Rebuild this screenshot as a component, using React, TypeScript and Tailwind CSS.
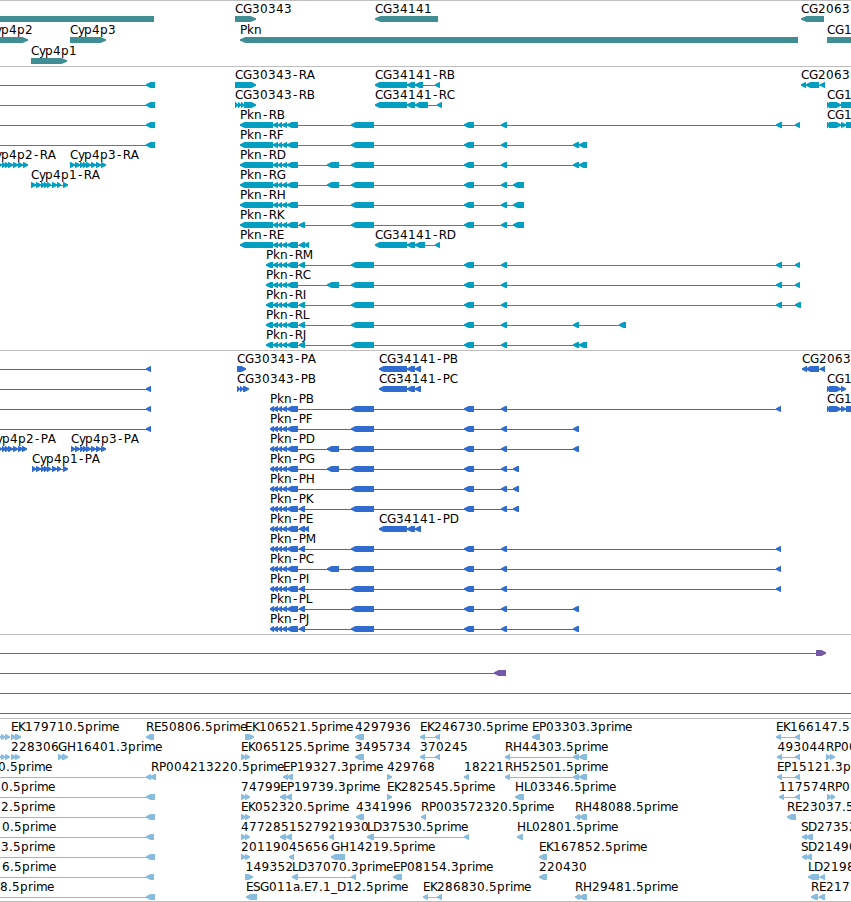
type Span = [number, number];

type Feature = {
  label?: string;
  at?: number;
  dir?: "left" | "right" | "none";
  spans: Span[];
};

type TrackData = {
  color: string;
  head: number;
  rowClass: string;
  trackClass: string;
  rows: Feature[][];
};

const left = (label: string, at: number, ...spans: Span[]): Feature => ({ label, at, dir: "left", spans });
const right = (label: string, at: number, ...spans: Span[]): Feature => ({ label, at, dir: "right", spans });

// zero-width span that pulls the connecting line past the left edge
const OFF: Span = [-20, -20];

const MID: Span[] = [[273, 278], [278, 282], [282, 287], [287, 298]];
const RNA_LONG: Span[] = [[240, 273], ...MID];
const RNA_SHORT: Span[] = [[266, 273], ...MID];
const CDS: Span[] = [[270, 274], ...MID];
const E299: Span = [299, 305];
const E327: Span = [327, 339];
const CORE: Span[] = [[351, 374], [464, 474], [501, 507]];
const FAR: Span[] = [[776, 782], [795, 800]];
const PAIR: Span[] = [[573, 579], [579, 587]];
const CYP3: Span[] = [[70, 75], [75, 80], [80, 84], [83, 87], [86, 91], [91, 96], [96, 101], [101, 106]];
const CYP2: Span[] = CYP3.map(([a, b]) => [a - 78, b - 78]);
const CYP1: Span[] = [[31, 36], [36, 41], [41, 45], [44, 48], [47, 51], [52, 57], [57, 61], [63, 68]];
const CG2063: Span[] = [[802, 807], [806, 819], [820, 825]];
const CG1: Span[] = [[827, 830], [829, 841]];

const genes: Feature[][] = [
  [
    { dir: "none", spans: [[-20, 154]] },
    right("CG30343", 235, [235, 256]),
    left("CG34141", 375, [375, 438]),
    left("CG2063", 801, [801, 824]),
  ],
  [
    right("Cyp4p2", -13, [-20, 28]),
    right("Cyp4p3", 70, [70, 106]),
    left("Pkn", 240, [240, 798]),
    right("CG1", 827, [827, 870]),
  ],
  [right("Cyp4p1", 31, [31, 67])],
];

const rnaEdge = left("", 0, OFF, [146, 155]);

const transcripts: Feature[][] = [
  [
    rnaEdge,
    right("CG30343-RA", 235, [235, 256]),
    left("CG34141-RB", 375, [375, 407], [407, 415], [415, 423], [435, 440]),
    left("CG2063", 801, [801, 806], ...CG2063.slice(1)),
  ],
  [
    rnaEdge,
    right("CG30343-RB", 235, [235, 238], [238, 241], [241, 244], [244, 256]),
    left("CG34141-RC", 375, [375, 407], [407, 415], [415, 428], [437, 442]),
    right("CG1", 827, ...CG1, [841, 860]),
  ],
  [
    rnaEdge,
    left("Pkn-RB", 240, ...RNA_LONG, ...CORE, ...FAR),
    right("CG1", 827, ...CG1, [841, 846], [846, 860]),
  ],
  [rnaEdge, left("Pkn-RF", 240, ...RNA_LONG, ...CORE, ...PAIR)],
  [
    right("Cyp4p2-RA", -13, ...CYP2),
    right("Cyp4p3-RA", 70, ...CYP3),
    left("Pkn-RD", 240, ...RNA_LONG, E327, ...CORE, ...PAIR),
  ],
  [right("Cyp4p1-RA", 31, ...CYP1), left("Pkn-RG", 240, ...RNA_LONG, E327, ...CORE, [513, 524])],
  [left("Pkn-RH", 240, ...RNA_LONG, ...CORE, [513, 524])],
  [left("Pkn-RK", 240, ...RNA_LONG, E299, ...CORE, [513, 524])],
  [
    left("Pkn-RE", 240, ...RNA_LONG, E299, [304, 309]),
    left("CG34141-RD", 375, [375, 407], [407, 415], [415, 425], [435, 440]),
  ],
  [left("Pkn-RM", 266, ...RNA_SHORT, E299, ...CORE, ...FAR)],
  [left("Pkn-RC", 266, ...RNA_SHORT, E327, ...CORE, ...FAR)],
  [left("Pkn-RI", 266, ...RNA_SHORT, E299, ...CORE, [776, 782], [795, 801])],
  [left("Pkn-RL", 266, ...RNA_SHORT, E299, ...CORE, [573, 579], [619, 626])],
  [left("Pkn-RJ", 266, ...RNA_SHORT, E299, ...CORE, ...PAIR)],
];

const cdsEdge = left("", 0, OFF, [146, 151]);
const CG34141P: Span[] = [[379, 407], [407, 415], [415, 421]];

const proteins: Feature[][] = [
  [
    cdsEdge,
    right("CG30343-PA", 237, [237, 246]),
    left("CG34141-PB", 379, ...CG34141P),
    left("CG2063", 802, ...CG2063),
  ],
  [
    cdsEdge,
    right("CG30343-PB", 237, [237, 240], [240, 243], [243, 249]),
    left("CG34141-PC", 379, ...CG34141P),
    right("CG1", 827, ...CG1, [841, 846]),
  ],
  [
    cdsEdge,
    left("Pkn-PB", 270, ...CDS, ...CORE, [776, 781]),
    right("CG1", 827, ...CG1, [841, 846], [846, 860]),
  ],
  [cdsEdge, left("Pkn-PF", 270, ...CDS, ...CORE, [573, 579])],
  [
    right("Cyp4p2-PA", -12, ...CYP2.slice(0, 7), [22, 27]),
    right("Cyp4p3-PA", 71, [71, 75], ...CYP3.slice(1)),
    left("Pkn-PD", 270, ...CDS, E327, ...CORE, [573, 579]),
  ],
  [
    right("Cyp4p1-PA", 32, [32, 36], ...CYP1.slice(1)),
    left("Pkn-PG", 270, ...CDS, E327, ...CORE, [513, 519]),
  ],
  [left("Pkn-PH", 270, ...CDS, ...CORE, [513, 519])],
  [left("Pkn-PK", 270, ...CDS, E299, ...CORE, [513, 519])],
  [left("Pkn-PE", 270, ...CDS, E299, [304, 309]), left("CG34141-PD", 379, ...CG34141P)],
  [left("Pkn-PM", 270, ...CDS, E299, ...CORE, [776, 781])],
  [left("Pkn-PC", 270, ...CDS, E327, ...CORE, [776, 781])],
  [left("Pkn-PI", 270, ...CDS, E299, ...CORE, [776, 781])],
  [left("Pkn-PL", 270, ...CDS, E299, ...CORE, [573, 579])],
  [left("Pkn-PJ", 270, ...CDS, E299, ...CORE, [573, 579])],
];

const insertions: Feature[][] = [
  [right("", 0, OFF, [816, 826])],
  [left("", 0, OFF, [494, 506])],
  [{ dir: "none", spans: [OFF, [870, 870]] }],
  [{ dir: "none", spans: [OFF, [870, 870]] }],
];

const EST_EDGE: Span[] = [[-3, 1], [1, 5], [5, 10]];
const TWIN: Span[] = [[241, 246], [245, 250]];

const ests: Feature[][] = [
  [
    right("", 0, ...EST_EDGE),
    right("EK179710.5prime", 11, [11, 16], [15, 21]),
    left("RE50806.5prime", 146, [146, 154]),
    right("EK106521.5prime", 245, [245, 254]),
    left("4297936", 355, [355, 364]),
    left("EK246730.5prime", 420, [420, 425], [435, 440]),
    left("EP03303.3prime", 532, [532, 540]),
    left("EK166147.5", 776, [776, 781], [795, 800]),
  ],
  [
    right("", 0, ...EST_EDGE),
    right("228306", 11, [11, 16], [15, 20]),
    right("GH16401.3prime", 58, [58, 63], [62, 68]),
    right("EK065125.5prime", 241, ...TWIN),
    left("3495734", 355, [355, 364]),
    left("370245", 420, [420, 425], [435, 440]),
    left("RH44303.5prime", 505, [505, 510], ...PAIR),
    left("493044", 777.5, [777, 782], [795, 800]),
    right("RP00", 826, [826, 831], [830, 835]),
  ],
  [
    left("0.5prime", -2, OFF, [146, 151], [150, 156]),
    left("RP004213220.5prime", 151),
    left("EP19327.3prime", 283, [283, 288], [287, 293]),
    right("429768", 387, [387, 392]),
    left("18221", 464, [464, 469]),
    left("RH52501.5prime", 505, [505, 510], ...PAIR),
    left("EP15121.3p", 777, [777, 782], [795, 800]),
  ],
  [
    left("0.5prime", 1, OFF, [146, 155]),
    right("74799", 241, ...TWIN),
    left("EP19739.3prime", 280, [280, 286], [286, 292]),
    right("EK282545.5prime", 387, [387, 392]),
    left("HL03346.5prime", 515, [515, 524]),
    left("117574", 779, [779, 784], [795, 800]),
    right("RP0", 827, [827, 832], [831, 835]),
  ],
  [
    left("2.5prime", 1, OFF, [146, 155]),
    right("EK052320.5prime", 241, ...TWIN),
    left("4341996", 356, [356, 364]),
    left("RP003572320.5prime", 421, [421, 426]),
    left("RH48088.5prime", 575, [575, 580], [579, 587]),
    left("RE23037.5", 787, [787, 796]),
  ],
  [
    left("0.5prime", 2, OFF, [146, 154]),
    right("47728", 241, ...TWIN),
    left("515279", 281, [280, 286], [286, 292]),
    left("21930", 329, [329, 334]),
    left("LD37530.5prime", 367, [367, 374], [464, 469]),
    left("HL02801.5prime", 517, [517, 523]),
    left("SD27352", 801, [802, 807], [806, 813]),
  ],
  [
    left("3.5prime", 1, OFF, [146, 155]),
    right("201190", 241, ...TWIN),
    left("45656", 289, [289, 294]),
    left("GH14219.5prime", 331, [331, 345]),
    left("EK167852.5prime", 539, [539, 547]),
    left("SD21490", 801, [802, 807], [806, 812]),
  ],
  [
    left("6.5prime", 2, OFF, [146, 154]),
    right("149352", 245.5, [245, 253]),
    left("LD37070.3prime", 292, [292, 298], [351, 356]),
    left("EP08154.3prime", 393, [393, 402]),
    left("220430", 539, [539, 547]),
    left("LD2198", 808, [808, 819], [820, 825]),
  ],
  [
    left("8.5prime", 0, OFF, [146, 155]),
    left("ESG011a.E7.1_D12.5prime", 246, [246, 257]),
    left("EK286830.5prime", 423, [423, 428], [437, 442]),
    left("RH29481.5prime", 575, [575, 580], [579, 587]),
    left("RE217", 811, [811, 818], [819, 825]),
  ],
];

const tracks: TrackData[] = [
  { color: "#408e94", head: 6, rowClass: "h-[21px]", trackClass: "h-[66px]", rows: genes },
  { color: "#009fc2", head: 5, rowClass: "h-5", trackClass: "h-[284px]", rows: transcripts },
  { color: "#306ccf", head: 5, rowClass: "h-5", trackClass: "h-[284px]", rows: proteins },
  { color: "#7558a8", head: 5, rowClass: "h-5", trackClass: "h-[84px]", rows: insertions },
  { color: "#87bcde", head: 5, rowClass: "h-5", trackClass: "h-[184px] border-b", rows: ests },
];

const ADVANCE: Record<string, number> = {
  A: 8.5, B: 7, C: 8, D: 9, E: 7, F: 7, G: 9, H: 9, I: 4, J: 4, K: 7, L: 6, M: 10, P: 7, R: 8, S: 7,
  a: 7, e: 7, i: 3, k: 7, m: 11, n: 8, p: 8, r: 5, y: 6, "-": 6.7, ".": 4, _: 6,
};

// x of every character, digits sit on an 8px pitch
const charPositions = (label: string, start: number) => {
  let x = start;
  return Array.from(label)
    .map((ch) => {
      // the hyphen is narrow, so centre it in its cell
      const current = ch === "-" ? x + 0.9 : x;
      x += ADVANCE[ch] ?? 8;
      return current;
    })
    .join(" ");
};

// blunt arrow head: the tip is about two pixels tall
const arrow = ([a, b]: Span, dir: string | undefined, head: number) => {
  if (dir === "none") return `M${a} 14H${b}V20H${a}Z`;
  const h = Math.min(head, b - a) - 0.5;
  if (dir === "left") return `M${a} 16.2L${a + h} 14H${b}V20H${a + h}L${a} 17.8Z`;
  return `M${b} 16.2L${b - h} 14H${a}V20H${b - h}L${b} 17.8Z`;
};

const Glyph = ({ feature, head }: { feature: Feature; head: number }) => {
  const { spans, dir, label, at = 0 } = feature;
  return (
    <g>
      {spans.length > 1 && (
        <rect x={spans[0][0]} y={17} width={spans[spans.length - 1][1] - spans[0][0] - 1} height={1} />
      )}
      {spans
        .filter(([a, b]) => b > a)
        .map((span, i) => (
          <path key={i} d={arrow(span, dir, head)} />
        ))}
      {label && (
        <text x={charPositions(label, at)} y={11} className="fill-black text-[12px]">
          {label}
        </text>
      )}
    </g>
  );
};

const Track = ({ track }: { track: TrackData }) => (
  <section className={`${track.trackClass} flex shrink-0 flex-col border-t border-[#bebebe] pt-px`}>
    {track.rows.map((row, i) => (
      <svg
        key={i}
        width="851"
        fill={track.color}
        className={`${track.rowClass} block w-[851px] shrink-0 overflow-visible`}
      >
        {row.map((feature, j) => (
          <Glyph key={j} feature={feature} head={track.head} />
        ))}
      </svg>
    ))}
  </section>
);

export default function App() {
  return (
    <main className="flex h-[902px] w-[851px] flex-col overflow-hidden bg-white font-['DejaVu_Sans',sans-serif]">
      {tracks.map((track) => (
        <Track key={track.color} track={track} />
      ))}
    </main>
  );
}
